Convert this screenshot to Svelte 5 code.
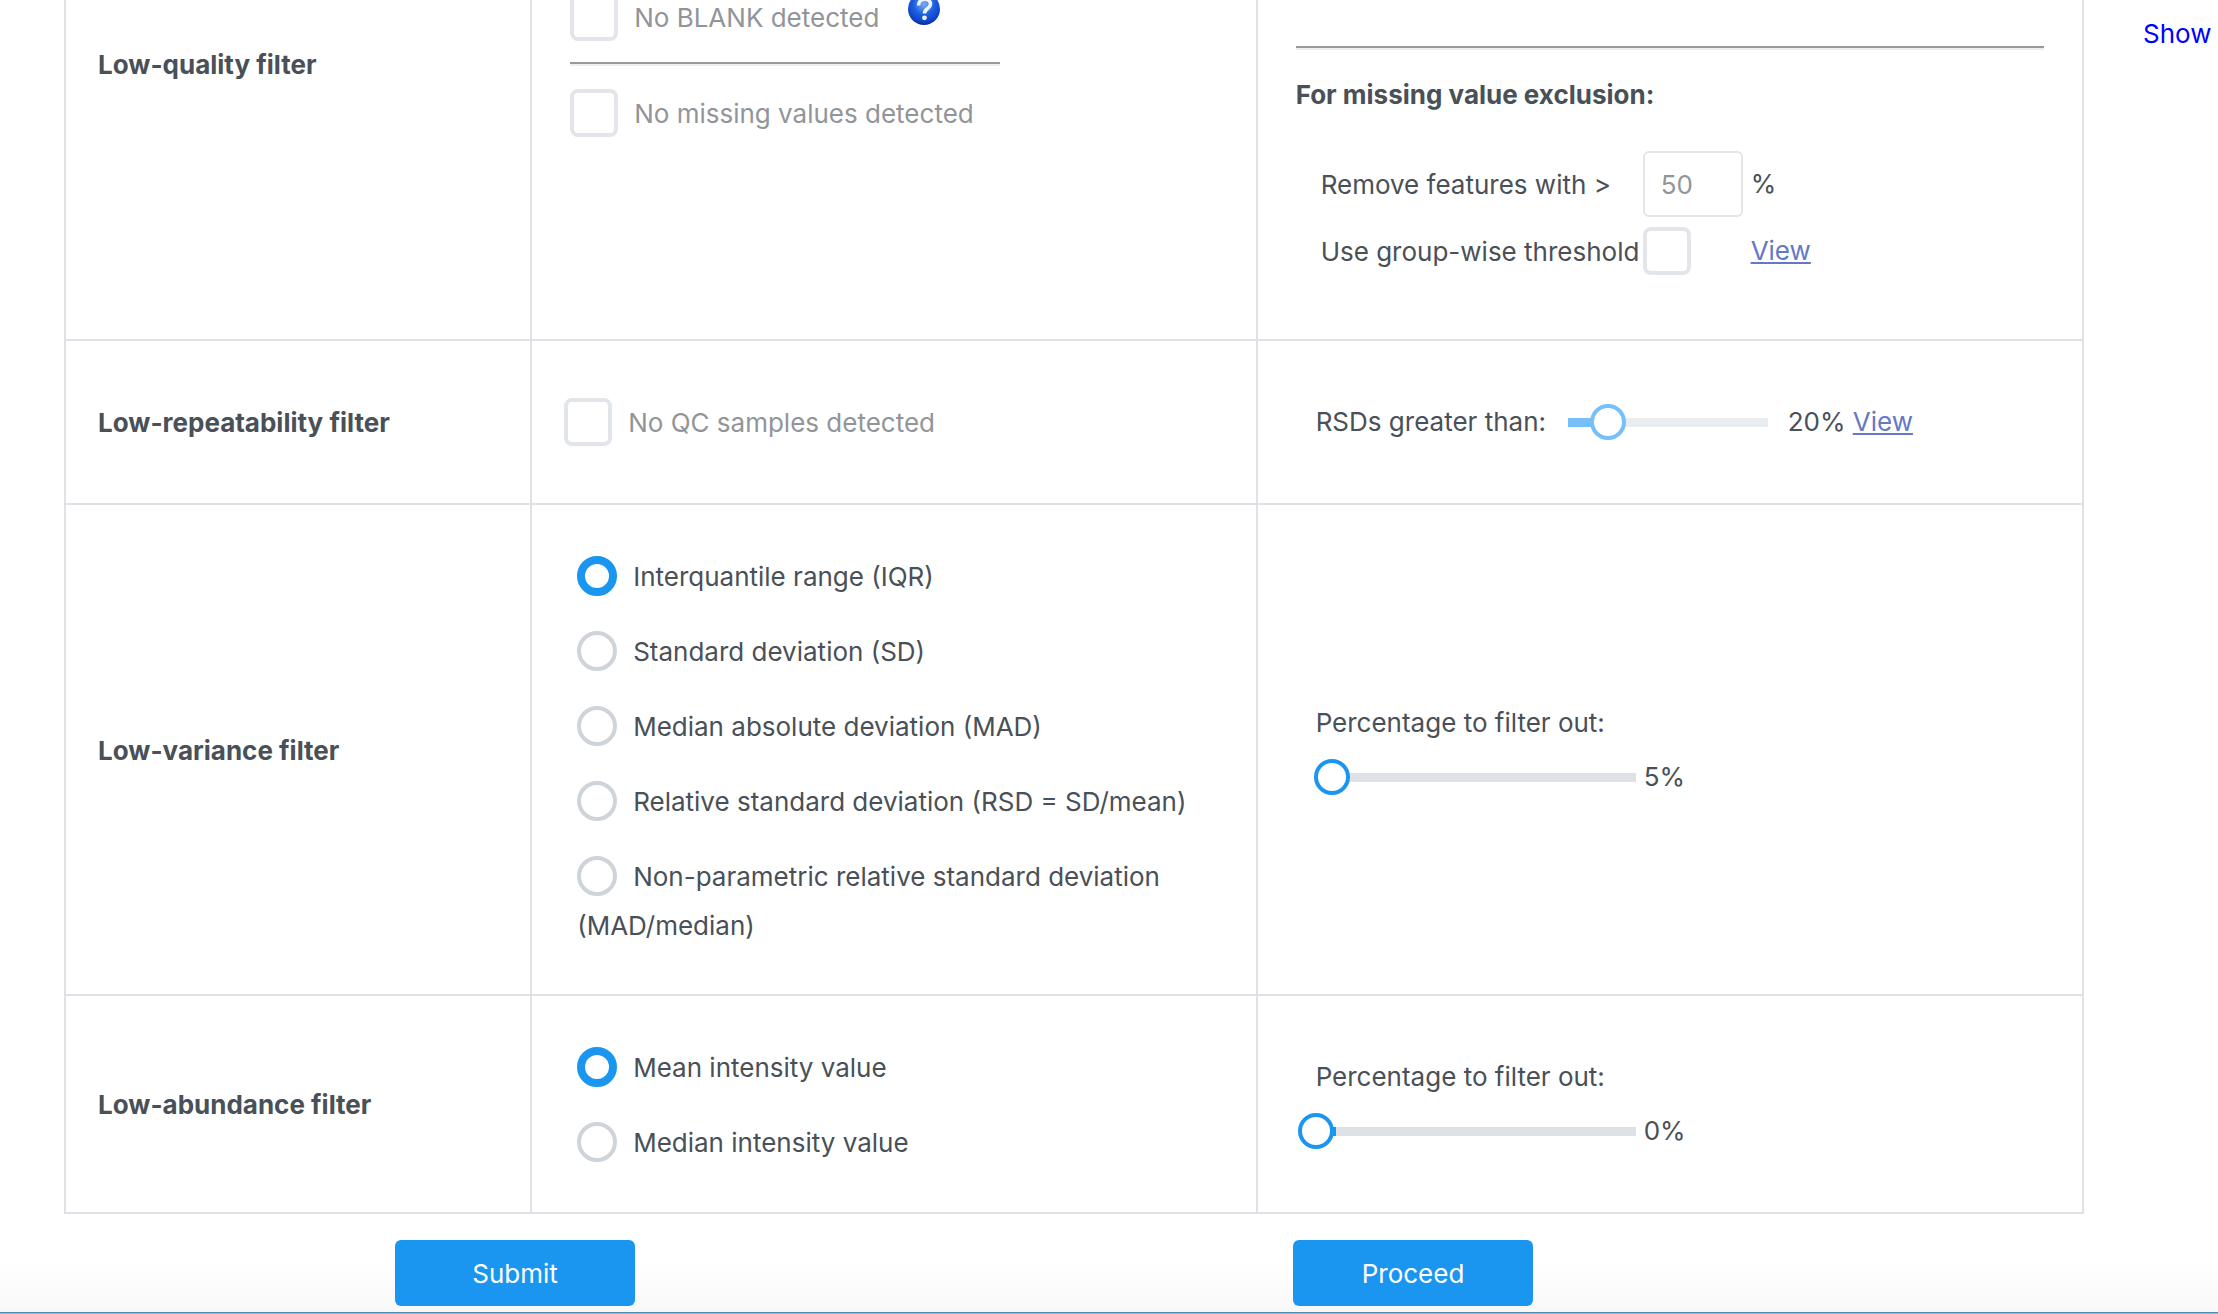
<script>
  const varianceOptions = [
    'Interquantile range (IQR)',
    'Standard deviation (SD)',
    'Median absolute deviation (MAD)',
    'Relative standard deviation (RSD = SD/mean)',
    'Non-parametric relative standard deviation (MAD/median)',
  ];
  const abundanceOptions = ['Mean intensity value', 'Median intensity value'];

  let variance = $state(varianceOptions[0]);
  let abundance = $state(abundanceOptions[0]);
  let rsd = $state(20);
  let variancePct = $state(5);
  let abundancePct = $state(0);
</script>

{#snippet radios(name, options, selected, pick)}
  <div class="radios">
    {#each options as option}
      <label class="radio">
        <input type="radio" {name} value={option} checked={option === selected} onchange={() => pick(option)} />{option}
      </label>
    {/each}
  </div>
{/snippet}

{#snippet check(text)}
  <label class="check"><input type="checkbox" disabled /><span>{text}</span></label>
{/snippet}

<div class="page">
  <div class="content">
    <main>
      <table>
        <colgroup><col class="c-name" /><col class="c-method" /><col /></colgroup>
        <tbody>
          <tr class="quality">
            <th scope="row">Low-quality filter</th>
            <td>
              <div class="check-line">
                {@render check('No BLANK detected')}
                <button class="help" aria-label="Help">
                  <svg viewBox="0 0 32 32" width="32" height="32" aria-hidden="true">
                    <defs>
                      <radialGradient id="ball" cx="50%" cy="35%" r="65%">
                        <stop offset="0" stop-color="#78aef2" />
                        <stop offset="0.5" stop-color="#1f5fdf" />
                        <stop offset="0.8" stop-color="#1048d0" />
                        <stop offset="1" stop-color="#0a2a9c" />
                      </radialGradient>
                    </defs>
                    <circle cx="16" cy="16" r="16" fill="url(#ball)" />
                    <path d="M10.5 12.5c0-8 12-8 12-1.500c0 4.500-6 4.500-6 9.500" fill="none" stroke="#eef4ff" stroke-width="3.600" />
                    <circle cx="16.500" cy="24.800" r="2.400" fill="#eef4ff" />
                  </svg>
                </button>
              </div>
              <hr class="short" />
              {@render check('No missing values detected')}
            </td>
            <td>
              <hr />
              <h2>For missing value exclusion:</h2>
              <div class="missing">
                <label for="pct-missing">Remove features with &gt;</label>
                <input id="pct-missing" class="text" type="text" value="50" disabled />
                <span>%</span>
                <label for="group-wise">Use group-wise threshold</label>
                <input id="group-wise" type="checkbox" disabled />
                <a href="#groups">View</a>
              </div>
            </td>
          </tr>
          <tr class="repeatability">
            <th scope="row">Low-repeatability filter</th>
            <td>{@render check('No QC samples detected')}</td>
            <td>
              <div class="rsd">
                <label for="rsd">RSDs greater than:</label>
                <span class="slider small" style:--value="{rsd}%"><input id="rsd" type="range" min="0" max="100" bind:value={rsd} disabled /></span>
                <span>{rsd}% <a href="#rsd">View</a></span>
              </div>
            </td>
          </tr>
          <tr class="variance">
            <th scope="row">Low-variance filter</th>
            <td>{@render radios('variance', varianceOptions, variance, (v) => (variance = v))}</td>
            <td>
              <div class="percentage">
                <label for="variance-pct">Percentage to filter out:</label>
                <div class="slider-line">
                  <span class="slider" style:--value="{variancePct}%"><input id="variance-pct" type="range" min="0" max="100" bind:value={variancePct} /></span>
                  <span>{variancePct}%</span>
                </div>
              </div>
            </td>
          </tr>
          <tr class="abundance">
            <th scope="row">Low-abundance filter</th>
            <td>{@render radios('abundance', abundanceOptions, abundance, (v) => (abundance = v))}</td>
            <td>
              <div class="percentage">
                <label for="abundance-pct">Percentage to filter out:</label>
                <div class="slider-line">
                  <span class="slider" style:--value="{abundancePct}%"><input id="abundance-pct" type="range" min="0" max="100" bind:value={abundancePct} /></span>
                  <span>{abundancePct}%</span>
                </div>
              </div>
            </td>
          </tr>
        </tbody>
      </table>
      <div class="actions">
        <button class="primary">Submit</button>
        <button class="primary">Proceed</button>
      </div>
    </main>
    <aside><a href="#show">Show</a></aside>
  </div>
</div>

<style>
  :global(body) {
    margin: 0;
    background: #fff;
    overflow: hidden;
  }
  .page,
  .page * {
    box-sizing: border-box;
  }
  .page {
    color: #495057;
    font: 26px/32px Inter, 'Liberation Sans', sans-serif;
    background: linear-gradient(to top, #f8f8f8, #fff 50px);
    border-bottom: 1px solid #86c0e2;
    box-shadow: inset 0 -1px 0 #5088a8;
  }
  .content {
    display: grid;
    grid-template-columns: minmax(0, 1fr) 134px;
  }
  main {
    padding-left: 64px;
    padding-bottom: 7px;
  }
  table {
    width: 100%;
    table-layout: fixed;
    border-collapse: separate;
    border-spacing: 0;
    border-left: 2px solid #dee2e6;
    background: #fff;
  }
  .c-name {
    width: 23.1%;
  }
  .c-method {
    width: 35.95%;
  }
  th,
  td {
    padding: 0 38px;
    border-right: 2px solid #dee2e6;
    border-bottom: 2px solid #dee2e6;
    text-align: left;
    vertical-align: middle;
  }
  th {
    padding: 2px 32px 0;
    font-weight: 700;
  }
  .quality {
    height: 341px;
  }
  .quality > * {
    vertical-align: top;
  }
  .quality th {
    padding-top: 49px;
  }
  .repeatability {
    height: 164px;
  }
  .repeatability td {
    padding-left: 32px;
  }
  .variance {
    height: 491px;
  }
  .abundance {
    height: 218px;
  }
  hr {
    margin: 0;
    border: 2px solid;
    border-width: 2px 0;
    border-color: #9a9a9a transparent #eee;
  }
  .quality td:last-child hr {
    margin-top: 46px;
  }
  hr.short {
    width: 430px;
    max-width: 100%;
    margin: 21px 0 23px;
  }
  h2 {
    margin: 29px 0 40px;
    font-size: 26px;
    line-height: 32px;
    font-weight: 700;
  }
  .check-line {
    display: flex;
    align-items: flex-start;
    gap: 29px;
    margin-top: -7px;
  }
  .check {
    display: flex;
    align-items: center;
    gap: 16px;
    color: #919599;
  }
  .check span,
  .missing label {
    padding-top: 2px;
  }
  .help {
    width: 32px;
    height: 32px;
    padding: 0;
    border: 0;
    background: none;
  }
  .help svg {
    display: block;
  }
  input {
    margin: 0;
    font: inherit;
  }
  input[type='checkbox'] {
    appearance: none;
    flex: none;
    width: 48px;
    height: 48px;
    border: 4px solid #e2e5ea;
    border-radius: 8px;
    background: #fff;
  }
  .missing {
    display: grid;
    grid-template-columns: 314px 100px auto;
    justify-content: start;
    align-items: center;
    gap: 10px 8px;
    margin-left: 25px;
    white-space: nowrap;
  }
  .text {
    width: 100px;
    height: 66px;
    padding: 0 16px;
    border: 2px solid #e2e5ea;
    border-radius: 6px;
    color: #919599;
    background: #fff;
  }
  td a {
    color: #6478c8;
    text-decoration: underline;
  }
  .rsd {
    display: flex;
    align-items: center;
    padding-left: 26px;
    white-space: nowrap;
  }
  .rsd label {
    width: 252px;
  }
  .rsd .slider {
    margin-right: 20px;
  }
  .radios {
    display: flex;
    flex-direction: column;
    gap: 26px;
    padding: 2px 0 0 7px;
    line-height: 49px;
  }
  input[type='radio'] {
    appearance: none;
    width: 40px;
    height: 40px;
    margin-right: 16px;
    vertical-align: -10px;
    border: 4px solid #ced4da;
    border-radius: 50%;
    background: #fff;
  }
  input[type='radio']:checked {
    border: 8px solid #1b96f0;
  }
  .percentage {
    padding-left: 20px;
    line-height: 54px;
  }
  .percentage label {
    display: block;
  }
  .slider-line {
    display: flex;
    align-items: center;
    gap: 8px;
  }
  .slider {
    --fill: #1b96f0;
    --rail: #dee2e6;
    display: flex;
    width: 320px;
  }
  .slider.small {
    --fill: #76bff8;
    --rail: #e9edf0;
    width: 200px;
  }
  input[type='range'] {
    appearance: none;
    flex: none;
    width: calc(100% + 36px);
    height: 36px;
    margin: 0 -18px;
    background: none;
  }
  input[type='range']::-webkit-slider-runnable-track {
    height: 36px;
    background:
      linear-gradient(var(--fill), var(--fill)) 18px 14px / max(20px, calc(var(--value) - 8px)) 9px no-repeat,
      linear-gradient(var(--rail), var(--rail)) 18px 14px / calc(100% - 36px) 9px no-repeat;
  }
  input[type='range']::-webkit-slider-thumb {
    appearance: none;
    box-sizing: border-box;
    width: 36px;
    height: 36px;
    border: 4px solid var(--fill);
    border-radius: 50%;
    background: #fff;
  }
  .actions {
    display: flex;
    gap: 658px;
    padding: 26px 0 0 331px;
  }
  .primary {
    width: 240px;
    height: 66px;
    padding: 2px 0 0;
    border: 0;
    border-radius: 6px;
    color: #fff;
    background: #1b96f0;
    font: inherit;
  }
  aside {
    padding: 18px 0 0 59px;
  }
  aside a {
    color: #00f;
    text-decoration: none;
  }
</style>
